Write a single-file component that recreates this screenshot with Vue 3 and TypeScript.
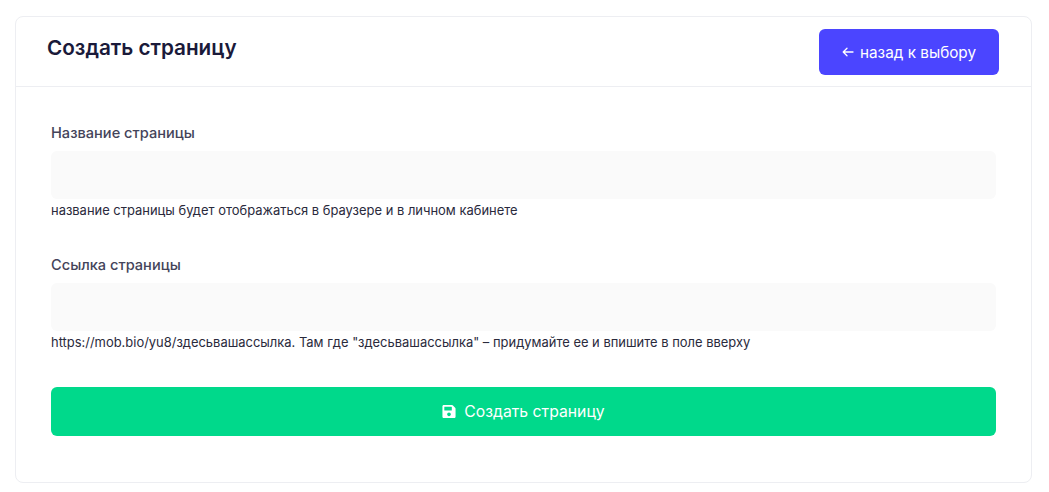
<script setup lang="ts">
const title = 'Создать страницу'
</script>

<template>
  <div class="page">
    <div class="card">
      <header class="head">
        <h1 class="title">{{ title }}</h1>
        <button class="back" type="button">
          <svg class="arrow" viewBox="0 0 12 12" width="12" height="12" fill="none" stroke="currentColor" stroke-width="1.3" stroke-linecap="round" stroke-linejoin="round"><path d="M11 6H1.2M5 2.2 1.2 6 5 9.8"/></svg>
          <span>назад к выбору</span>
        </button>
      </header>
      <form class="body" @submit.prevent>
        <div class="field">
          <label class="label">Название страницы</label>
          <input class="input" type="text" />
          <p class="hint">название страницы будет отображаться в браузере и в личном кабинете</p>
        </div>
        <div class="field">
          <label class="label">Ссылка страницы</label>
          <input class="input" type="text" />
          <p class="hint">https://mob.bio/yu8/здесьвашассылка. Там где "здесьвашассылка" – придумайте ее и впишите в поле вверху</p>
        </div>
        <button class="submit" type="submit">
          <svg class="save" viewBox="0 0 448 512" width="14" height="15" fill="currentColor"><path d="M433.9 129.9l-83.9-83.9A48 48 0 0 0 316.1 32H48C21.5 32 0 53.5 0 80v352c0 26.5 21.5 48 48 48h352c26.5 0 48-21.5 48-48V163.9a48 48 0 0 0-14.1-34zM224 416c-35.3 0-64-28.7-64-64 0-35.3 28.7-64 64-64s64 28.7 64 64c0 35.3-28.7 64-64 64zm96-304.5V212c0 6.6-5.4 12-12 12H76c-6.6 0-12-5.4-12-12V108c0-6.6 5.4-12 12-12h228.5c3.2 0 6.2 1.3 8.5 3.5l3.5 3.5c2.3 2.3 3.5 5.3 3.5 8.5z"/></svg>
          <span>{{ title }}</span>
        </button>
      </form>
    </div>
  </div>
</template>

<style>
html, body { margin: 0; background: #fff; }
</style>

<style scoped>
.page {
  width: 1049px;
  height: 492px;
  box-sizing: border-box;
  padding: 16px 17px 9px 15px;
  font-family: Inter, "Noto Sans", sans-serif;
  background: #fff;
}
.card {
  box-sizing: border-box;
  height: 467px;
  border: 1px solid #edeef2;
  border-radius: 8px;
  background: #fff;
}
.head {
  height: 70px;
  box-sizing: border-box;
  border-bottom: 1px solid #edeef2;
  padding: 12px 32px 0 31px;
  display: flex;
  justify-content: space-between;
  align-items: flex-start;
}
.title {
  margin: 6px 0 0;
  font-size: 20.7px;
  line-height: 26px;
  font-weight: 600;
  color: #1a1a3a;
}
.back {
  width: 180px;
  height: 46px;
  border: 0;
  border-radius: 6px;
  background: #4b45ff;
  color: #fff;
  font: 400 15.3px Inter, sans-serif;
  display: flex;
  align-items: center;
  justify-content: center;
  gap: 6px;
}
.body {
  padding: 37px 35px 0;
  display: flex;
  flex-direction: column;
}
.field {
  display: flex;
  flex-direction: column;
  margin-bottom: 38px;
}
.field:last-of-type {
  margin-bottom: 37px;
}
.label {
  font-size: 14.6px;
  line-height: 18px;
  font-weight: 450;
  color: #44445a;
  margin-bottom: 9px;
}
.input {
  height: 48px;
  box-sizing: border-box;
  border: 0;
  border-radius: 6px;
  background: #fafafa;
  outline: none;
}
.hint {
  margin: 4px 0 0;
  font-size: 12.95px;
  line-height: 15px;
  color: #2a2a3c;
}
.submit {
  height: 49px;
  border: 0;
  border-radius: 6px;
  background: #00d98b;
  color: #fff;
  font: 400 15.75px Inter, sans-serif;
  display: flex;
  align-items: center;
  justify-content: center;
  gap: 8px;
}
</style>
